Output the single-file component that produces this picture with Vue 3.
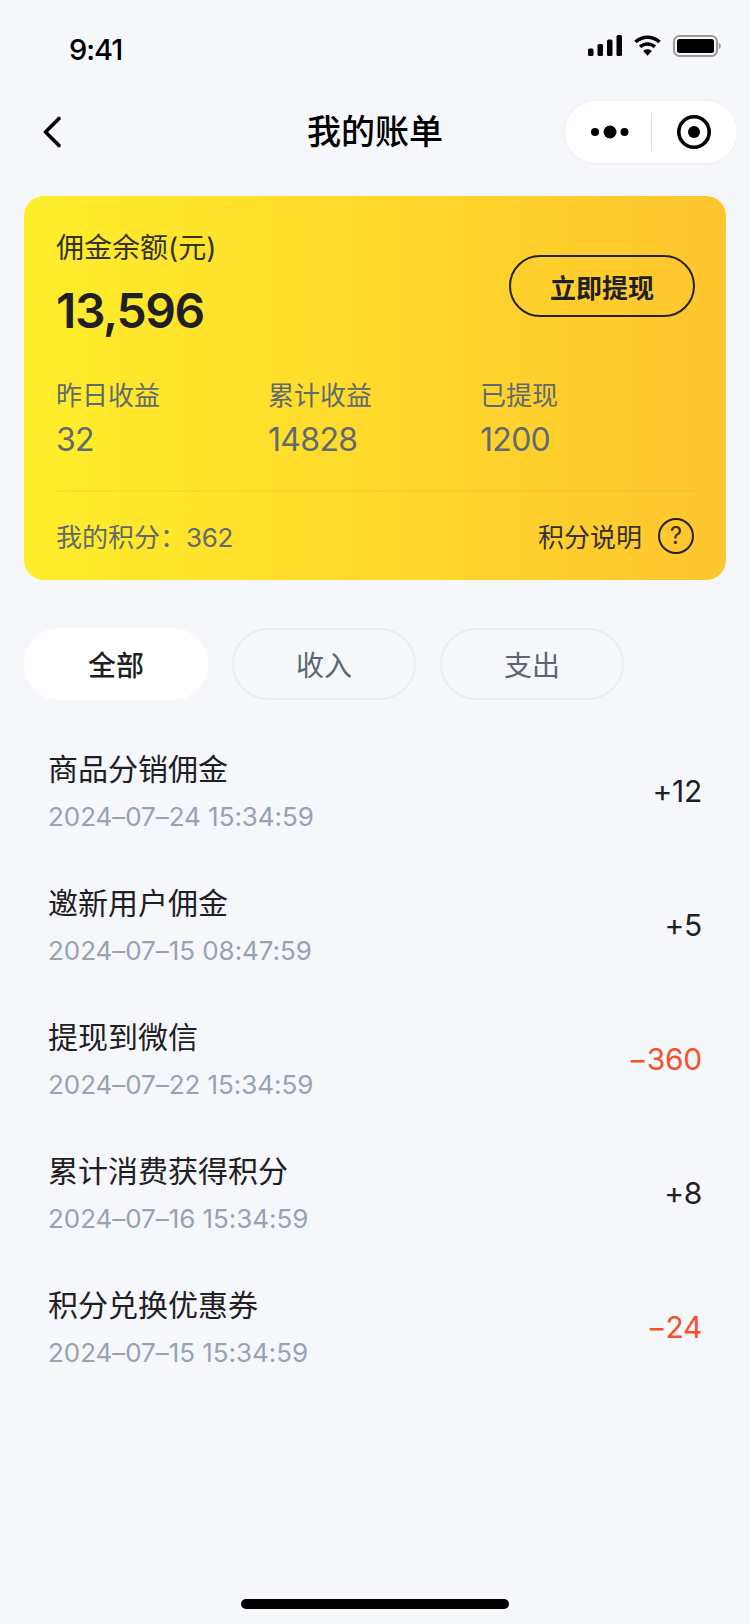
<script setup>
const stats = [
  { label: '昨日收益', value: '32' },
  { label: '累计收益', value: '14828' },
  { label: '已提现', value: '1200' },
]
const tabs = ['全部', '收入', '支出']
const rows = [
  { title: '商品分销佣金', time: '2024–07–24 15:34:59', amount: '+12' },
  { title: '邀新用户佣金', time: '2024–07–15 08:47:59', amount: '+5' },
  { title: '提现到微信', time: '2024–07–22 15:34:59', amount: '−360', out: true },
  { title: '累计消费获得积分', time: '2024–07–16 15:34:59', amount: '+8' },
  { title: '积分兑换优惠券', time: '2024–07–15 15:34:59', amount: '−24', out: true },
]
</script>

<template>
  <div class="page">
    <div class="status">
      <span class="clock">9:41</span>
      <div class="status-icons">
        <svg width="34" height="21" viewBox="0 0 34 21"><rect x="0" y="13.500" width="5.500" height="7.500" rx="1.500"/><rect x="9.500" y="9" width="5.500" height="12" rx="1.500"/><rect x="19" y="4.500" width="5.500" height="16.500" rx="1.500"/><rect x="28.500" y="0" width="5.500" height="21" rx="1.500"/></svg>
        <svg width="31" height="21" viewBox="0 0 32 22"><path d="M16 4.100c4.400 0 8.400 1.700 11.400 4.500l2.500-2.600C26.200 2.500 21.400.4 16 .4S5.800 2.500 2.100 6l2.500 2.600c3-2.800 7-4.500 11.400-4.500z"/><path d="M16 11.300c2.500 0 4.700.9 6.400 2.500l2.600-2.700C22.600 8.900 19.500 7.600 16 7.600s-6.600 1.300-9 3.500l2.600 2.700c1.700-1.600 3.900-2.500 6.400-2.500z"/><path d="M16 15c-1.700 0-3.300.7-4.500 1.800L16 21.700l4.500-4.900C19.300 15.700 17.700 15 16 15z"/></svg>
        <svg width="48" height="22" viewBox="0 0 48 22"><rect x="1" y="1" width="43" height="20" rx="5.500" fill="none" stroke="#9a9a9a" stroke-width="2"/><rect x="4" y="4" width="37" height="14" rx="2.500"/><path d="M45.800 8c1.300.4 2 1.600 2 3s-.7 2.600-2 3z" fill="#9a9a9a"/></svg>
      </div>
    </div>

    <div class="nav">
      <svg class="back" width="20" height="32" viewBox="0 0 20 32"><path d="M17 2.500 3.500 16 17 29.500" fill="none" stroke="#000" stroke-width="3.600" stroke-linecap="round" stroke-linejoin="round"/></svg>
      <span class="nav-title">我的账单</span>
      <div class="capsule">
        <svg class="dots" width="38" height="14" viewBox="0 0 38 14"><circle cx="4" cy="7" r="4"/><circle cx="19" cy="7" r="6.500"/><circle cx="33.500" cy="7" r="4"/></svg>
        <i class="capsule-line"></i>
        <svg class="target" width="36" height="36" viewBox="0 0 36 36"><circle cx="18" cy="18" r="15.200" fill="none" stroke="#000" stroke-width="3.600"/><circle cx="18" cy="18" r="6"/></svg>
      </div>
    </div>

    <section class="card">
      <div class="balance-row">
        <div>
          <div class="balance-label">佣金余额(元)</div>
          <div class="balance">13,596</div>
        </div>
        <button class="withdraw">立即提现</button>
      </div>
      <div class="stats">
        <div v-for="s in stats" :key="s.label" class="stat">
          <div class="stat-label">{{ s.label }}</div>
          <div class="stat-value">{{ s.value }}</div>
        </div>
      </div>
      <div class="points">
        <span class="points-left">我的积分：<span class="num">362</span></span>
        <span class="points-right">积分说明<span class="help">?</span></span>
      </div>
    </section>

    <div class="tabs">
      <div v-for="(t, i) in tabs" :key="t" class="tab" :class="{ active: i === 0 }">{{ t }}</div>
    </div>

    <div class="list">
      <div v-for="r in rows" :key="r.time + r.title" class="row">
        <div>
          <div class="row-title">{{ r.title }}</div>
          <div class="row-time">{{ r.time }}</div>
        </div>
        <div class="amount" :class="{ out: r.out }">{{ r.amount }}</div>
      </div>
    </div>

    <div class="home"></div>
  </div>
</template>

<style>
html, body { margin: 0; background: #f5f7fb; }
</style>

<style scoped>
.page {
  position: relative;
  width: 750px;
  height: 1624px;
  overflow: hidden;
  background: #f5f7fb;
  color: #1f2023;
  font-family: Inter, "Noto Sans CJK SC", sans-serif;
}
.status {
  height: 88px;
  box-sizing: border-box;
  padding: 30px 29px 0 69px;
  display: flex;
  justify-content: space-between;
  align-items: flex-start;
}
.clock {
  font-size: 29px;
  line-height: 40px;
  font-weight: 500;
  color: #000;
  letter-spacing: -1px;
}
.status-icons {
  display: flex;
  align-items: flex-start;
  gap: 10px;
  padding-top: 5px;
}
.nav {
  position: relative;
  height: 88px;
  display: flex;
  align-items: center;
  justify-content: center;
}
.back { position: absolute; left: 42px; top: 28px; }
.nav-title {
  font-size: 34px;
  line-height: 44px;
  font-weight: 500;
  color: #000;
}
.capsule {
  position: absolute;
  left: 564px;
  top: 12px;
  width: 174px;
  height: 64px;
  box-sizing: border-box;
  border: 1px solid #eef0f4;
  border-radius: 32px;
  background: #fff;
  display: flex;
  align-items: center;
}
.dots { margin-left: 26px; }
.capsule-line { width: 1px; height: 38px; background: #dcdcdc; margin: 0 24px 0 22px; }
.card {
  margin: 20px 24px 0;
  height: 384px;
  box-sizing: border-box;
  padding: 35px 32px 0;
  border-radius: 20px;
  background: linear-gradient(90deg, #ffee2b 0%, #ffd92b 50%, #ffc52f 100%);
}
.balance-row {
  display: flex;
  justify-content: space-between;
  align-items: flex-start;
}
.balance-label {
  font-size: 28px;
  line-height: 34px;
  color: #33332b;
}
.balance {
  margin-top: 17px;
  font-size: 48px;
  line-height: 58px;
  font-weight: 600;
  color: #1f2023;
  letter-spacing: -1.4px;
}
.withdraw {
  margin: 24px -1px 0 0;
  width: 186px;
  height: 62px;
  box-sizing: border-box;
  border: 2px solid #222;
  border-radius: 31px;
  background: transparent;
  font: 600 26px Inter, "Noto Sans CJK SC", sans-serif;
  color: #1f2023;
  padding: 0;
}
.stats {
  margin-top: 38px;
  display: grid;
  grid-template-columns: 212px 212px 1fr;
}
.stat-label {
  font-size: 26px;
  line-height: 36px;
  color: #5f6b70;
}
.stat-value {
  margin-top: 6px;
  font-size: 32px;
  line-height: 40px;
  color: #5f6b70;
  letter-spacing: -0.7px;
}
.points {
  margin-top: 30px;
  padding-top: 25px;
  border-top: 2px solid rgba(200, 150, 0, 0.1);
  display: flex;
  justify-content: space-between;
  align-items: center;
}
.points-left {
  font-size: 26px;
  color: #5f6b70;
}
.num { font-size: 26px; letter-spacing: -0.4px; }
.points-right {
  display: flex;
  align-items: center;
  gap: 16px;
  font-size: 26px;
  color: #33332b;
}
.help {
  width: 36px;
  height: 36px;
  box-sizing: border-box;
  border: 2px solid #222;
  border-radius: 50%;
  display: flex;
  align-items: center;
  justify-content: center;
  font-size: 24px;
  line-height: 1;
}
.tabs {
  margin: 48px 24px 0;
  display: flex;
  gap: 24px;
}
.tab {
  width: 184px;
  height: 72px;
  box-sizing: border-box;
  border: 2px solid #ebedf2;
  border-radius: 36px;
  display: flex;
  align-items: center;
  justify-content: center;
  font-size: 28px;
  color: #5c6570;
}
.tab.active {
  background: #fff;
  border-color: #fff;
  color: #1f2023;
  font-weight: 500;
}
.list { margin-top: 24px; }
.row {
  height: 134px;
  padding: 0 48px;
  display: flex;
  align-items: center;
  justify-content: space-between;
}
.row-title {
  font-size: 30px;
  line-height: 42px;
  color: #1f2023;
}
.row-time {
  margin-top: 10px;
  font-size: 26px;
  line-height: 34px;
  color: #98a2b3;
  letter-spacing: -0.05px;
}
.amount {
  font-size: 30px;
  color: #1f2023;
  letter-spacing: -0.3px;
}
.amount.out { color: #f4512c; }
.home {
  position: absolute;
  left: 241px;
  top: 1599px;
  width: 268px;
  height: 10px;
  border-radius: 5px;
  background: #000;
}
</style>
